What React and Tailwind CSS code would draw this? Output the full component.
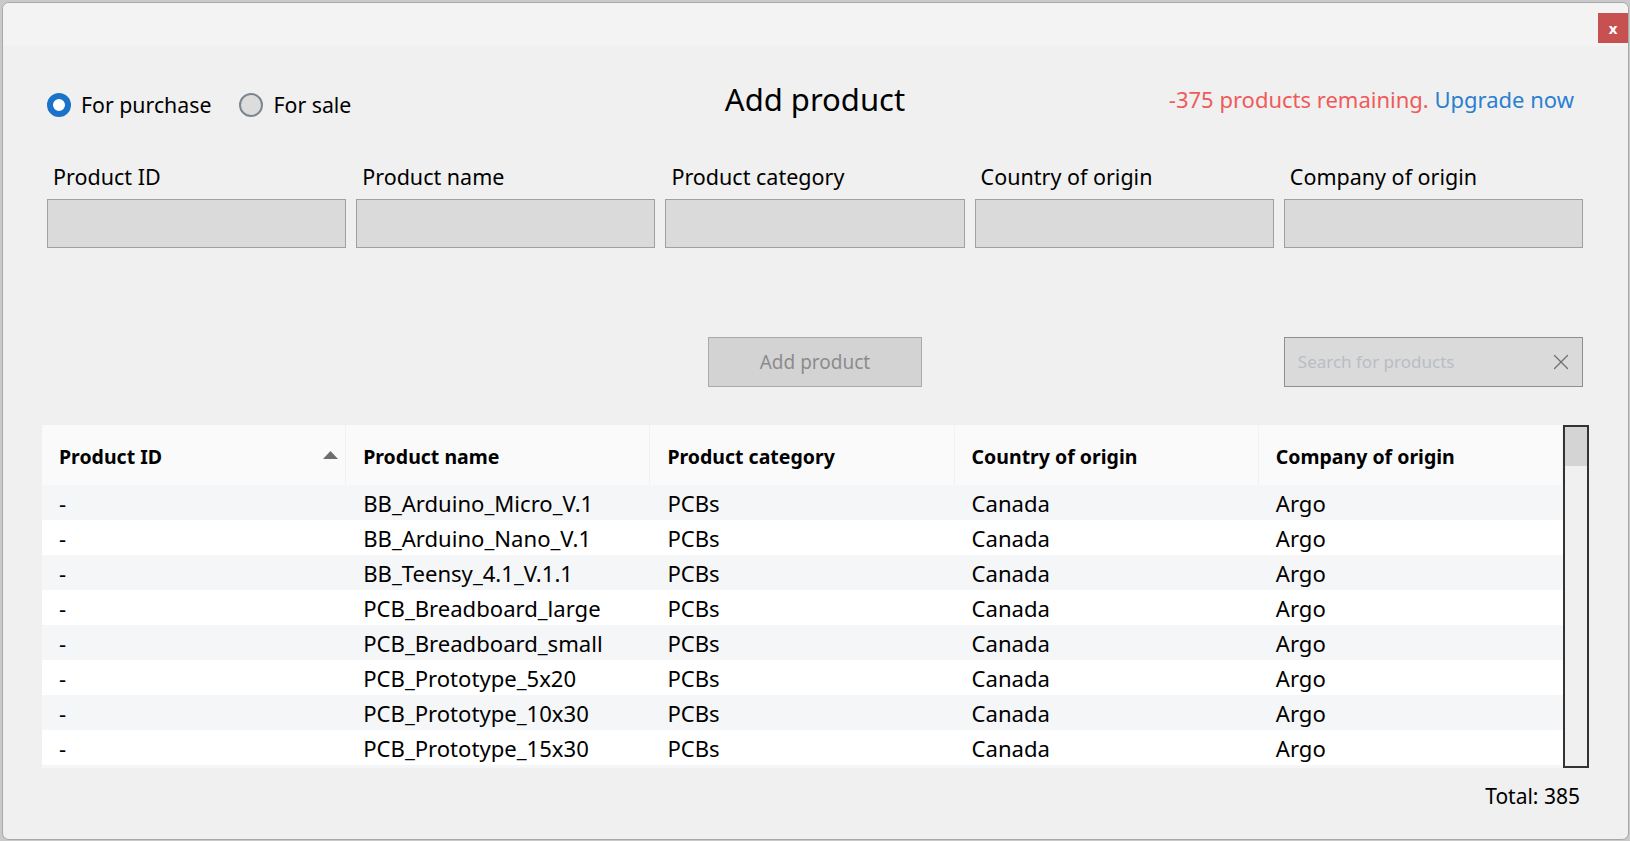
import { X } from "lucide-react";

const rows = [
  "BB_Arduino_Micro_V.1",
  "BB_Arduino_Nano_V.1",
  "BB_Teensy_4.1_V.1.1",
  "PCB_Breadboard_large",
  "PCB_Breadboard_small",
  "PCB_Prototype_5x20",
  "PCB_Prototype_10x30",
  "PCB_Prototype_15x30",
];

const fields = [
  "Product ID",
  "Product name",
  "Product category",
  "Country of origin",
  "Company of origin",
];

function Radio({ checked, label }) {
  return (
    <label className="flex items-center gap-[10px]">
      {checked ? (
        <span className="w-[24px] h-[24px] rounded-full border-[6px] border-[#1a73c9] bg-white" />
      ) : (
        <span className="w-[24px] h-[24px] rounded-full border-2 border-[#7d8690] bg-[#dcdcdc]" />
      )}
      <span className="text-[21.3px] text-black">{label}</span>
    </label>
  );
}

export default function App() {
  return (
    <div
      className="w-[1630px] h-[841px] overflow-hidden bg-[#c9c9c9] pt-[2px] pl-[2px]"
      style={{ fontFamily: '"Noto Sans", "Open Sans", sans-serif' }}
    >
      <div className="w-[1627px] h-[838px] bg-[#f0f0f0] border border-[#a8a8a8] rounded-[7px] flex flex-col overflow-hidden">
        {/* title bar */}
        <div className="h-[43px] shrink-0 bg-[#f3f3f3] flex justify-end items-start pt-[10px]">
          <button className="w-[30px] h-[30px] bg-[#c75050] text-white text-[15px] font-bold leading-none flex items-center justify-center">
            x
          </button>
        </div>

        <div className="flex flex-col pl-[44px] pr-[45px]">
          {/* top row */}
          <div className="grid grid-cols-3 items-center h-[50px] mt-[34px]">
            <div className="flex items-center gap-[28px]">
              <Radio checked label="For purchase" />
              <Radio label="For sale" />
            </div>
            <h1 className="text-center text-[31px] text-black -mt-[11px]">Add product</h1>
            <p className="text-right text-[22px] pr-[9px] -mt-[12px]">
              <span className="text-[#ef5b5b]">-375 products remaining.</span>{" "}
              <span className="text-[#2b7fd0]">Upgrade now</span>
            </p>
          </div>

          {/* fields */}
          <div className="grid grid-cols-5 gap-[10px] mt-[33px]">
            {fields.map((f) => (
              <div key={f} className="flex flex-col">
                <span className="pl-[6px] text-[21.5px] leading-[28px] text-black">{f}</span>
                <input className="mt-[8px] h-[49px] bg-[#dadada] border border-[#a0a0a0] outline-none" />
              </div>
            ))}
          </div>

          {/* actions */}
          <div className="grid grid-cols-5 gap-[10px] mt-[89px]">
            <div />
            <div />
            <div className="flex justify-center">
              <button className="w-[214px] h-[50px] bg-[#d3d3d3] border border-[#aaaaaa] text-[19px] text-[#8c8c8c]">
                Add product
              </button>
            </div>
            <div />
            <div className="h-[50px] bg-[#dadada] border border-[#8f8f8f] flex items-center justify-between pl-[13px] pr-[8px]">
              <span className="text-[17px] text-[#b9bdc4]">Search for products</span>
              <X className="w-[26px] h-[26px] text-[#6f6f6f]" strokeWidth={1.2} />
            </div>
          </div>

          {/* table */}
          <div className="mt-[38px] -ml-[5px] -mr-[6px] h-[343px] flex overflow-hidden">
            <div className="flex-1 flex flex-col overflow-hidden bg-[#f5f6f8]">
              <div className="grid grid-cols-5 h-[60px] shrink-0 bg-[#fafafa]">
                {fields.map((f, i) => (
                  <div
                    key={f}
                    className="flex items-center justify-between px-[17px] pt-[4px] border-r border-[#f2f2f2] text-[19.5px] font-bold text-black"
                  >
                    <span>{f}</span>
                    {i === 0 && (
                      <svg width="15" height="8" viewBox="0 0 15 8" className="mr-[-10px] -mt-[5px]">
                        <path d="M7.5 0 L15 8 L0 8 Z" fill="#6d6d6d" />
                      </svg>
                    )}
                  </div>
                ))}
              </div>
              {rows.map((r, i) => (
                <div
                  key={r}
                  className={`grid grid-cols-5 h-[35px] shrink-0 items-center pt-[2px] text-[22.1px] text-black ${
                    i % 2 === 0 ? "bg-[#f5f6f8]" : "bg-white"
                  }`}
                >
                  <span className="px-[17px]">-</span>
                  <span className="px-[17px]">{r}</span>
                  <span className="px-[17px]">PCBs</span>
                  <span className="px-[17px]">Canada</span>
                  <span className="px-[17px]">Argo</span>
                </div>
              ))}
            </div>
            <div className="w-[26px] shrink-0 border-2 border-[#333333] bg-[#f0f0f0] flex flex-col">
              <div className="h-[39px] bg-[#d4d4d4]" />
            </div>
          </div>

          <p className="text-right text-[21px] text-black mt-[13px] pr-[3px]">Total: 385</p>
        </div>
      </div>
    </div>
  );
}
